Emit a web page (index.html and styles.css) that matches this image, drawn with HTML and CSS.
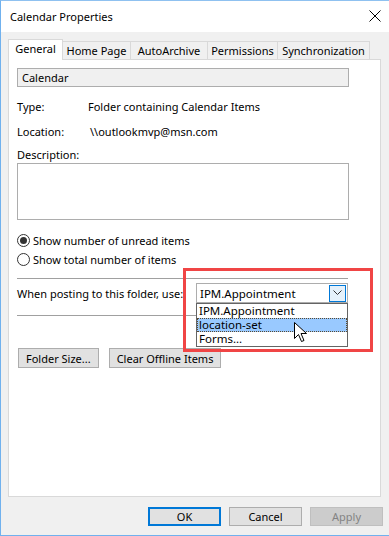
FILE: index.html
```html
<!DOCTYPE html>
<html lang="en">
<head>
  <meta charset="UTF-8">
  <title>Calendar Properties</title>
  <link rel="stylesheet" href="styles.css">
</head>
<body>

  <div class="window">
    <div class="titlebar">
      <span class="title">Calendar Properties</span>
      <svg class="close" width="12" height="12" viewBox="0 0 12 12">
        <path d="M0.5 0.5 L11.5 11.5 M11.5 0.5 L0.5 11.5" stroke="#000" stroke-width="1" fill="none"/>
      </svg>
    </div>

    <div class="dialog">
      <div class="tabs">
        <div class="tab active tab-general">General</div>
        <div class="tab tab-home">Home Page</div>
        <div class="tab tab-archive">AutoArchive</div>
        <div class="tab tab-perm">Permissions</div>
        <div class="tab tab-sync">Synchronization</div>
      </div>

      <div class="panel">
        <div class="namebox">Calendar</div>

        <div class="info-row first">
          <span class="info-label">Type:</span>
          <span>Folder containing Calendar Items</span>
        </div>
        <div class="info-row">
          <span class="info-label">Location:</span>
          <span class="loc">\\outlookmvp@msn.com</span>
        </div>

        <div class="desc-label">Description:</div>
        <div class="desc-box"></div>

        <div class="radios">
          <div class="radio"><span class="dot checked"></span>Show number of unread items</div>
          <div class="radio"><span class="dot"></span>Show total number of items</div>
        </div>

        <div class="sep"></div>

        <div class="post-row">
          <span class="post-label">When posting to this folder, use:</span>
          <div class="combo">
            <span class="combo-value">IPM.Appointment</span>
            <span class="combo-btn">
              <svg width="9" height="6" viewBox="0 0 9 6">
                <path d="M0.5 0.5 L4.5 4.5 L8.5 0.5" stroke="#333" stroke-width="1" fill="none"/>
              </svg>
            </span>
            <div class="dropdown">
              <div class="opt">IPM.Appointment</div>
              <div class="opt selected">location-set</div>
              <div class="opt">Forms...</div>
            </div>
          </div>
        </div>

        <div class="sep sep-low"></div>

        <div class="panel-buttons">
          <button class="btn">Folder Size...</button>
          <button class="btn">Clear Offline Items</button>
        </div>
      </div>

      <div class="footer">
        <button class="btn wide default">OK</button>
        <button class="btn wide">Cancel</button>
        <button class="btn wide disabled">Apply</button>
      </div>
    </div>

    <!-- callout drawn over the screenshot -->
    <div class="callout"></div>

    <svg class="cursor" width="14" height="22" viewBox="0 0 14 22">
      <path d="M0.5 0.5 L0.5 16.5 L4.5 12.5 L7.5 19.5 L10 18.5 L7 11.5 L12.5 11.5 Z" fill="#fff" stroke="#000" stroke-width="1" stroke-linejoin="miter"/>
    </svg>
  </div>

</body>
</html>
```

FILE: styles.css
```css
* {
  box-sizing: border-box;
}

body {
  margin: 0;
  padding: 0;
  font-family: "Noto Sans", "Open Sans", sans-serif;
  font-size: 11px;
  color: #000;
  background-color: #f0f0f0;
}

.window {
  position: relative;
  width: 389px;
  height: 536px;
  border-top: 1px solid #8fc1f0;
  border-left: 1px solid #70b1ee;
  border-bottom: 1px solid #70b1ee;
  background-color: #f0f0f0;
  overflow: hidden;
}

.titlebar {
  height: 31px;
  background-color: #ffffff;
  display: flex;
  align-items: center;
  justify-content: space-between;
  padding: 0 8px 0 9px;
}

.title {
  font-size: 11px;
  margin-top: -1px;
}

.close {
  display: block;
  margin-top: -1px;
}

.dialog {
  padding: 7px 0 0 7px;
}

/* tabs */
.tabs {
  display: flex;
  align-items: flex-end;
  height: 20px;
}

.tab {
  height: 18px;
  border: 1px solid #d9d9d9;
  border-bottom: none;
  border-left: none;
  background-color: #f0f0f0;
  display: flex;
  align-items: center;
  justify-content: center;
  white-space: nowrap;
  line-height: 1;
}

.tab.active {
  height: 21px;
  margin-bottom: -1px;
  background-color: #ffffff;
  border-left: 1px solid #d9d9d9;
  position: relative;
  z-index: 1;
  padding-bottom: 3px;
}

.tab-general { width: 55px; }
.tab-home { width: 68px; }
.tab-archive { width: 77px; }
.tab-perm { width: 70px; }
.tab-sync { width: 92px; }

.panel {
  width: 373px;
  height: 438px;
  background-color: #ffffff;
  border: 1px solid #d9d9d9;
  padding: 8px 0 0 8px;
}

.namebox {
  width: 332px;
  height: 19px;
  background-color: #f0f0f0;
  border: 1px solid #adadad;
  padding-left: 4px;
  line-height: 17px;
}

.info-row {
  display: flex;
  height: 16px;
  line-height: 16px;
  margin-top: 9px;
}

.info-row.first {
  margin-top: 12px;
}

.info-label {
  width: 71px;
}

.loc {
  padding-left: 2px;
}

.desc-label {
  height: 16px;
  line-height: 16px;
  margin-top: 7px;
}

.desc-box {
  width: 332px;
  height: 57px;
  margin-top: 0;
  border: 1px solid #adadad;
  background-color: #ffffff;
}

.radios {
  margin-top: 11px;
}

.radio {
  display: flex;
  align-items: center;
  height: 19px;
}

.dot {
  width: 13px;
  height: 13px;
  border: 1px solid #333;
  border-radius: 50%;
  margin-right: 3px;
  display: flex;
  align-items: center;
  justify-content: center;
}

.dot.checked::after {
  content: "";
  width: 7px;
  height: 7px;
  border-radius: 50%;
  background-color: #333;
}

.sep {
  width: 331px;
  height: 1px;
  background-color: #a0a0a0;
  margin-top: 9px;
}

.sep-low {
  margin-top: 12px;
}

.post-row {
  display: flex;
  align-items: center;
  justify-content: space-between;
  width: 331px;
  height: 20px;
  margin-top: 4px;
}

.post-label {
  white-space: nowrap;
}

.combo {
  position: relative;
  width: 152px;
  height: 20px;
  border: 1px solid #adadad;
  background-color: #ffffff;
  display: flex;
  align-items: center;
  justify-content: space-between;
  padding: 0 1px 0 3px;
}

.combo-value {
  font-size: 11.5px;
}

.combo-btn {
  width: 17px;
  height: 17px;
  border: 1px solid #0078d7;
  background-color: #e5f1fb;
  display: flex;
  align-items: center;
  justify-content: center;
}

.combo-btn svg {
  display: block;
}

.dropdown {
  position: absolute;
  top: 19px;
  left: -1px;
  width: 152px;
  border: 1px solid #646464;
  background-color: #ffffff;
  z-index: 2;
}

.opt {
  height: 14px;
  line-height: 12px;
  font-size: 11.5px;
  padding-left: 1px;
  border: 1px solid transparent;
}

.opt.selected {
  background-color: #99c9ff;
  border: 1px dotted #5a4a30;
}

.panel-buttons {
  display: flex;
  gap: 10px;
  margin-top: 32px;
  padding-left: 1px;
}

.btn {
  font-family: inherit;
  font-size: 11px;
  color: #000;
  height: 20px;
  padding: 0 7px;
  background-color: #e1e1e1;
  border: 1px solid #adadad;
  border-radius: 0;
  line-height: 1;
}

.footer {
  display: flex;
  justify-content: flex-end;
  gap: 8px;
  padding: 10px 6px 0 0;
}

.btn.wide {
  width: 73px;
  height: 19px;
}

.btn.default {
  border: 2px solid #0078d7;
}

.btn.disabled {
  background-color: #cccccc;
  border-color: #bfbfbf;
  color: #838383;
}

.callout {
  position: absolute;
  left: 182px;
  top: 267px;
  width: 190px;
  height: 84px;
  border: 3px solid #f04545;
  z-index: 3;
}

.cursor {
  position: absolute;
  left: 293px;
  top: 321px;
  z-index: 4;
}
```
